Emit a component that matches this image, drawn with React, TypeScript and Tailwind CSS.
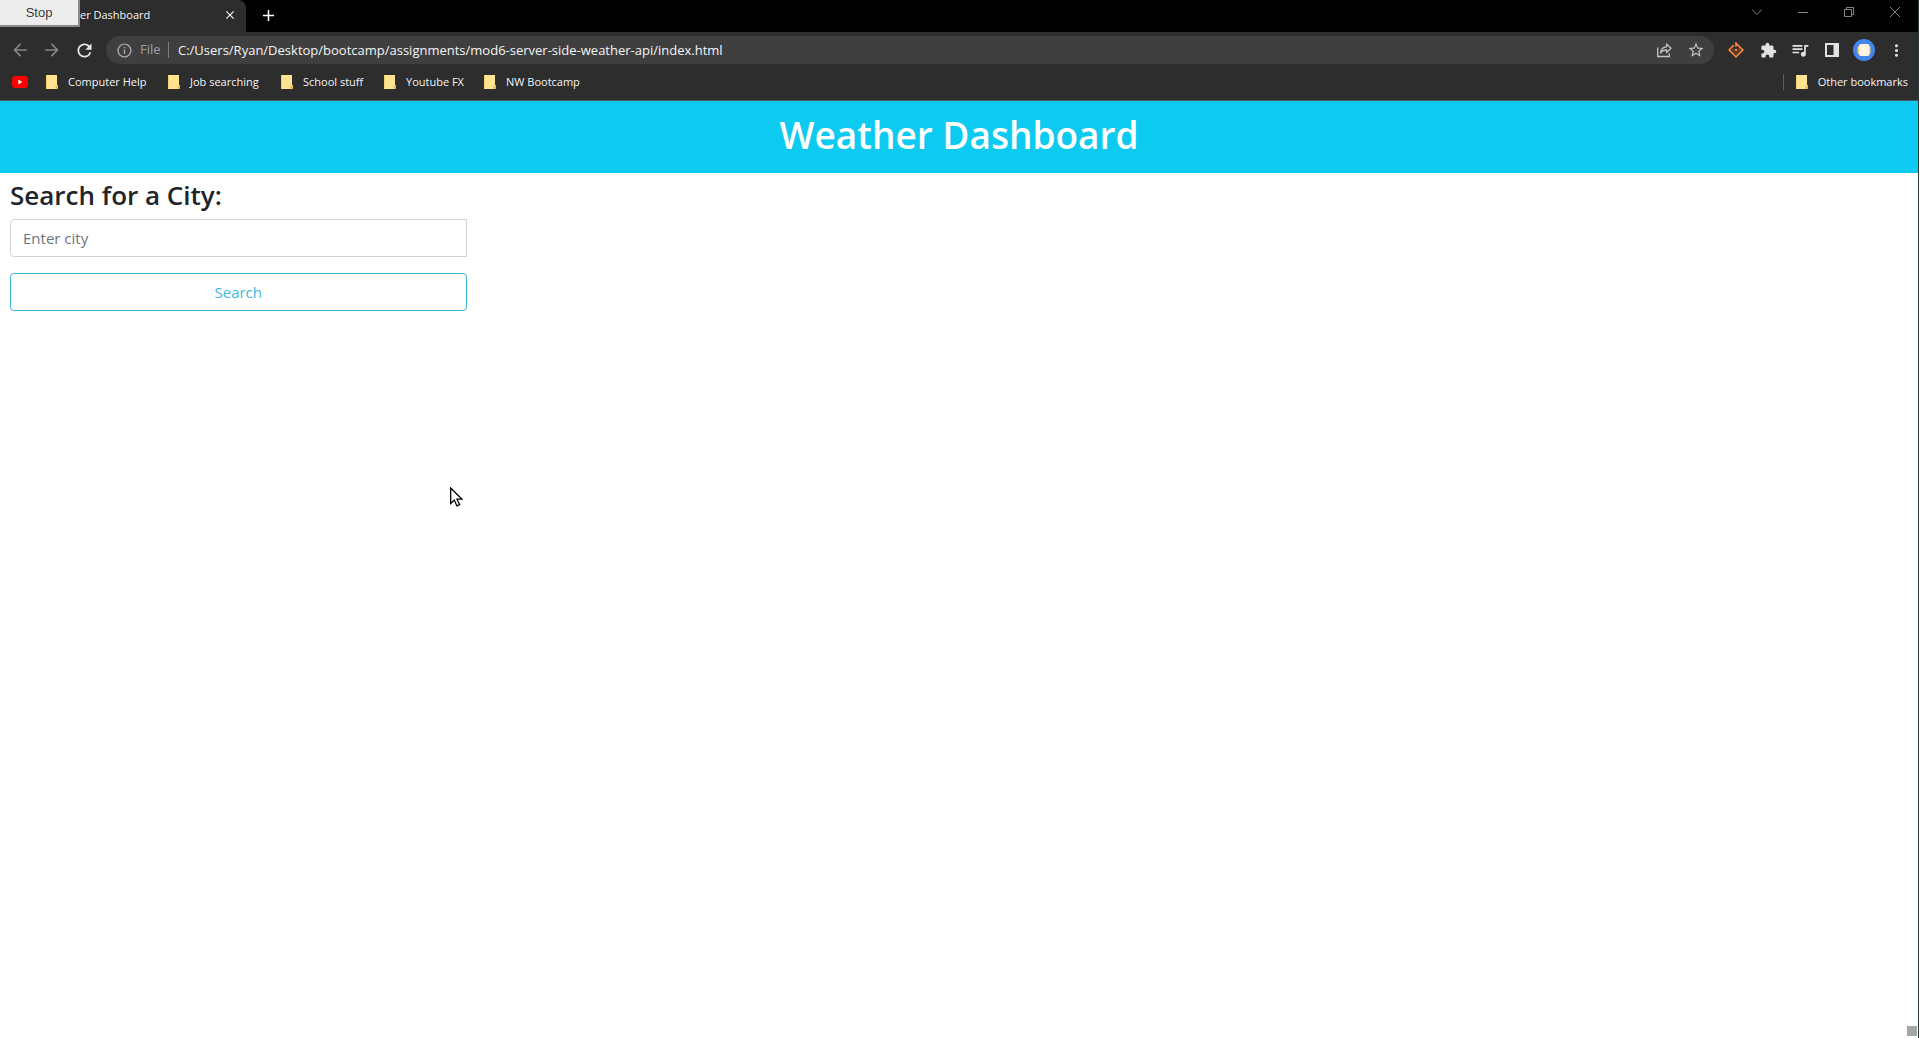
import React from "react";
import {
  MdAdd,
  MdArrowBack,
  MdArrowForward,
  MdClose,
  MdExtension,
  MdInfoOutline,
  MdMoreVert,
  MdQueueMusic,
  MdRefresh,
  MdStarBorder,
} from "react-icons/md";

const bookmarks = [
  { name: "Computer Help", width: "w-[122px]" },
  { name: "Job searching", width: "w-[113px]" },
  { name: "School stuff", width: "w-[103px]" },
  { name: "Youtube FX", width: "w-[100px]" },
  { name: "NW Bootcamp", width: "w-[112px]" },
];

function Folder() {
  return (
    <svg className="h-[14px] w-3 shrink-0" viewBox="0 0 12 14" aria-hidden="true">
      <path d="M0 0h11v10h1v4H0z" fill="#ffe38f" />
      <path d="M0 0h1v14H0z" fill="#f3d06d" />
      <path d="M9.500 10.500h2.500V14H9.500z" fill="#e8bd4c" />
    </svg>
  );
}

function YouTube() {
  return (
    <svg className="h-3 w-4" viewBox="0 0 16 12" aria-hidden="true">
      <rect width="16" height="12" rx="3.500" fill="#f00" />
      <path d="M6.300 3.500v5l4-2.500z" fill="#fff" />
    </svg>
  );
}

function ShareIcon() {
  return (
    <svg className="size-4" viewBox="0 0 16 16" fill="none" stroke="#c4c4c4" strokeWidth="1.300" aria-hidden="true">
      <path d="M1.700 5.500v9h11.600v-3.300" />
      <path d="M4.500 11c.5-3.800 2.500-6 6-6.200V2l4.500 4.300-4.500 4.200V7.800C7.800 7.800 6 8.700 4.500 11z" strokeLinejoin="round" />
    </svg>
  );
}

function DiamondIcon() {
  return (
    <svg className="size-4" viewBox="0 0 16 16" fill="none" aria-hidden="true">
      <path d="M5.800 3.200 1.200 8 8 14.800 14.800 8 8 1.200V4.800" stroke="#f4803c" strokeWidth="1.800" />
      <path d="M6 6.300 4.500 8 8 11.500 11.500 8 9.800 6.300" stroke="#a8501f" strokeWidth="1" />
      <circle cx="8" cy="8" r="1.300" fill="#f4803c" />
    </svg>
  );
}

function PanelIcon() {
  return (
    <svg className="size-[14px]" viewBox="0 0 14 14" aria-hidden="true">
      <path d="M0 0h14v14H0zM2 2v10h6.500V2z" fill="#e2e2e5" fillRule="evenodd" />
    </svg>
  );
}

function Avatar() {
  return (
    <svg className="size-[22px]" viewBox="0 0 22 22" aria-hidden="true">
      <circle cx="11" cy="11" r="11" fill="#4285ec" />
      <rect x="4.500" y="7" width="13" height="8" rx="1.500" fill="#f0c56c" />
      <rect x="6" y="5" width="10.500" height="12" rx="2" fill="#fff4df" />
    </svg>
  );
}

function IconButton({ label, children }: { label: string; children: React.ReactNode }) {
  return (
    <button type="button" aria-label={label} className="flex size-8 shrink-0 items-center justify-center">
      {children}
    </button>
  );
}

function WindowButton({ label, d }: { label: string; d: string }) {
  return (
    <button type="button" aria-label={label} className="flex h-6 w-[46px] items-center justify-center">
      <svg className="size-[10px]" viewBox="0 0 10 10" fill="none" stroke="#858585" strokeWidth="1" aria-hidden="true">
        <path d={d} />
      </svg>
    </button>
  );
}

function TabStrip() {
  return (
    <div className="flex h-8 bg-black">
      <div className="flex h-8 w-[246px] items-start rounded-tr-lg bg-[#2d2d2d] pr-2">
        <button
          type="button"
          className="h-[27px] w-20 border-r-2 border-b-2 border-[#8a8a8a] bg-[#ececec] font-['Liberation_Sans',sans-serif] text-[13px] text-[#3c3c3c]"
        >
          Stop
        </button>
        <span className="pt-1.5 text-[11px] leading-[18px] whitespace-nowrap text-gray-100">er Dashboard</span>
        <button type="button" aria-label="Close tab" className="mt-[7px] ml-auto flex size-4 items-center justify-center text-gray-100">
          <MdClose size={14} />
        </button>
      </div>
      <button type="button" aria-label="New tab" className="flex h-[30px] w-11 items-center justify-center text-white">
        <MdAdd size={19} />
      </button>
      <div className="ml-auto flex">
        <WindowButton label="Search tabs" d="M0 2.500 5 7.500 10 2.500" />
        <WindowButton label="Minimize" d="M0 5.500h10" />
        <WindowButton label="Restore" d="M.5 2.500h7v7h-7zM2.500 2.500v-2h7v7h-2" />
        <WindowButton label="Close window" d="M0 0l10 10M10 0 0 10" />
      </div>
    </div>
  );
}

function Toolbar() {
  return (
    <div className="flex h-9 items-center pl-1">
      <div className="flex items-center">
        <IconButton label="Back"><MdArrowBack size={20} color="#858585" /></IconButton>
        <IconButton label="Forward"><MdArrowForward size={20} color="#858585" /></IconButton>
        <IconButton label="Reload"><MdRefresh size={21} color="#e8e8e8" /></IconButton>
      </div>
      <div className="ml-1.5 flex h-7 flex-1 items-center rounded-full bg-[#3f3f3f] pr-0.5 pl-2.5">
        <MdInfoOutline size={17} color="#a8a8a8" />
        <span className="ml-[7px] w-7 text-[13px] text-[#a0a0a0]">File</span>
        <span className="h-4 w-px bg-[#7c7c7c]" />
        <input
          type="text"
          aria-label="Address"
          defaultValue="C:/Users/Ryan/Desktop/bootcamp/assignments/mod6-server-side-weather-api/index.html"
          className="ml-[9px] h-6 min-w-0 flex-1 bg-transparent text-[13px] text-gray-100 outline-none"
        />
        <IconButton label="Share"><ShareIcon /></IconButton>
        <IconButton label="Bookmark this page"><MdStarBorder size={18} color="#c4c4c4" /></IconButton>
      </div>
      <div className="flex items-center px-1.5">
        <IconButton label="Extension"><DiamondIcon /></IconButton>
        <IconButton label="Extensions"><MdExtension size={17} color="#e2e2e5" /></IconButton>
        <IconButton label="Media"><MdQueueMusic size={20} color="#e2e2e5" /></IconButton>
        <IconButton label="Side panel"><PanelIcon /></IconButton>
        <IconButton label="Profile"><Avatar /></IconButton>
        <IconButton label="Menu"><MdMoreVert size={19} color="#e2e2e5" /></IconButton>
      </div>
    </div>
  );
}

function BookmarksBar() {
  return (
    <div className="flex h-[33px] items-center border-b border-[#4a5a5e] pr-2.5 pb-1 pl-3 text-[11px] text-gray-100">
      <button type="button" aria-label="YouTube" className="mr-[18px]"><YouTube /></button>
      {bookmarks.map(({ name, width }) => (
        <button key={name} type="button" className={`${width} flex items-center gap-2.5 whitespace-nowrap`}>
          <Folder />
          {name}
        </button>
      ))}
      <div className="ml-auto flex items-center gap-3">
        <span className="h-4 w-px bg-[#5c5c5c]" />
        <button type="button" className="flex items-center gap-2.5 whitespace-nowrap">
          <Folder />
          Other bookmarks
        </button>
      </div>
    </div>
  );
}

function Cursor() {
  return (
    <svg className="absolute top-[487px] left-[450px] h-5 w-[13px]" viewBox="0 0 13 20" aria-hidden="true">
      <path d="M.7 1v15.500l3.600-3.400 2.600 5.800 2.700-1.200-2.600-5.500H12z" fill="#fff" stroke="#000" strokeWidth="1.300" />
    </svg>
  );
}

export default function App() {
  return (
    <div className="relative flex min-h-screen flex-col border-r border-[#2b3a3e] bg-white font-['Open_Sans',sans-serif]">
      <div className="bg-[#2d2d2d]">
        <TabStrip />
        <Toolbar />
        <BookmarksBar />
      </div>
      <header className="h-[72px] bg-[#0dcaf0] pt-2.5 text-center">
        <h1 className="text-[37px] leading-[48px] font-semibold text-white">Weather Dashboard</h1>
      </header>
      <main className="flex-1 px-2.5 pt-[5px]">
        <form className="w-1/4 pr-[18px]" onSubmit={(e) => e.preventDefault()}>
          <label htmlFor="city" className="block text-[26px] leading-[34px] font-semibold text-[#212529]">
            Search for a City:
          </label>
          <input
            id="city"
            type="text"
            placeholder="Enter city"
            className="mt-[7px] block h-[38px] w-full rounded-l border border-[#ced4da] px-3 text-[15px] text-[#212529] outline-none placeholder:text-[#6c757d]"
          />
          <button type="submit" className="mt-4 block h-[38px] w-full rounded border border-[#35b5d0] text-[15px] text-[#3dbbdb]">
            Search
          </button>
        </form>
      </main>
      <Cursor />
      <span className="absolute right-px bottom-0.5 size-2.5 bg-[#a6a6a6]" />
    </div>
  );
}
